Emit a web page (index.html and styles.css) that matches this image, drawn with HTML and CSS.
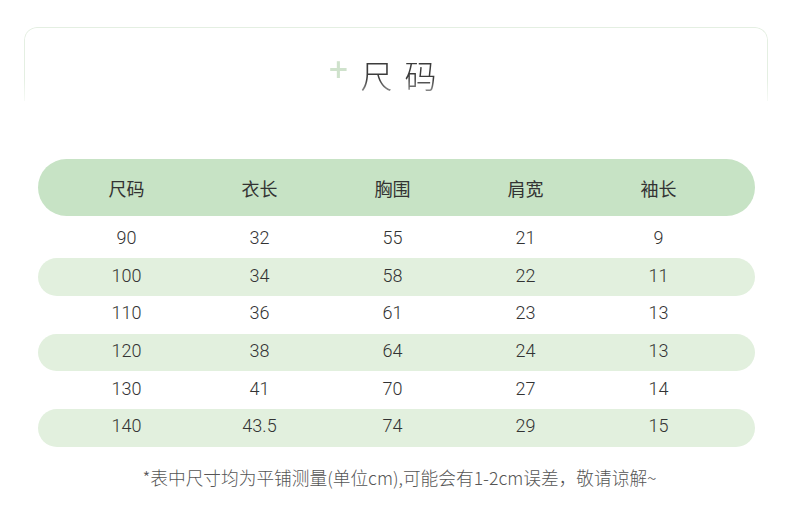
FILE: index.html
```html
<!DOCTYPE html>
<html lang="zh">
<head>
<meta charset="utf-8">
<link rel="stylesheet" href="styles.css">
</head>
<body>
<div class="page">
  <div class="title-box">
    <h1 class="title"><span class="plus">+</span>尺码</h1>
  </div>
  <div class="table">
    <div class="row head">
      <span>尺码</span><span>衣长</span><span>胸围</span><span>肩宽</span><span>袖长</span>
    </div>
    <div class="row"><span>90</span><span>32</span><span>55</span><span>21</span><span>9</span></div>
    <div class="row alt"><span>100</span><span>34</span><span>58</span><span>22</span><span>11</span></div>
    <div class="row"><span>110</span><span>36</span><span>61</span><span>23</span><span>13</span></div>
    <div class="row alt"><span>120</span><span>38</span><span>64</span><span>24</span><span>13</span></div>
    <div class="row"><span>130</span><span>41</span><span>70</span><span>27</span><span>14</span></div>
    <div class="row alt"><span>140</span><span>43.5</span><span>74</span><span>29</span><span>15</span></div>
  </div>
  <p class="note">*表中尺寸均为平铺测量(单位cm),可能会有1-2cm误差，敬请谅解~</p>
</div>
</body>
</html>
```
FILE: styles.css
```css
* { box-sizing: border-box; }
html, body { margin: 0; padding: 0; background: #fff; }
body {
  width: 790px;
  height: 518px;
  overflow: hidden;
  font-family: "Noto Sans", "Noto Sans CJK SC", sans-serif;
}
.page { padding-top: 27px; }
.title-box {
  margin: 0 22px 0 24px;
  height: 74px;
  border: 1.5px solid #e4efe2;
  border-bottom: none;
  border-radius: 13px 13px 0 0;
  display: flex;
  justify-content: center;
  -webkit-mask-image: linear-gradient(to bottom, #000 70%, rgba(0,0,0,0.3) 100%);
  mask-image: linear-gradient(to bottom, #000 70%, rgba(0,0,0,0.3) 100%);
}
.title {
  margin: 21px 0 0 0;
  font-family: "Noto Sans CJK SC", sans-serif;
  font-weight: 300;
  font-size: 32px;
  line-height: 40px;
  letter-spacing: 12px;
  color: #3c3c3c;
  padding-right: 16px;
}
.plus {
  display: inline-block;
  color: #cfe2cc;
  font-family: "DejaVu Sans", sans-serif;
  font-size: 26px;
  font-weight: 700;
  vertical-align: 10px;
  letter-spacing: 0;
  margin-right: 11px;
}
.table {
  margin: 58px 35px 0 38px;
}
.row {
  display: grid;
  grid-template-columns: repeat(5, 133px);
  padding-left: 22px;
  padding-bottom: 4px;
  height: 37.7px;
  align-items: center;
  font-family: "Roboto", sans-serif;
  font-weight: 300;
  font-size: 18px;
  color: #333;
  border-radius: 19px;
}
.row span { text-align: center; }
.row.head {
  height: 57px;
  background: #c7e3c5;
  border-radius: 29px;
  margin-bottom: 4.5px;
  font-family: "Noto Sans CJK SC", sans-serif;
  font-weight: 400;
  font-size: 18px;
  color: #333;
  padding-top: 1px;
  padding-bottom: 0;
}
.row.alt { background: #e2f0de; }
.note {
  margin: 17px 0 0 0;
  padding-left: 9px;
  text-align: center;
  font-family: "Noto Sans CJK SC", sans-serif;
  font-weight: 300;
  font-size: 17.7px;
  color: #555;
}
```
